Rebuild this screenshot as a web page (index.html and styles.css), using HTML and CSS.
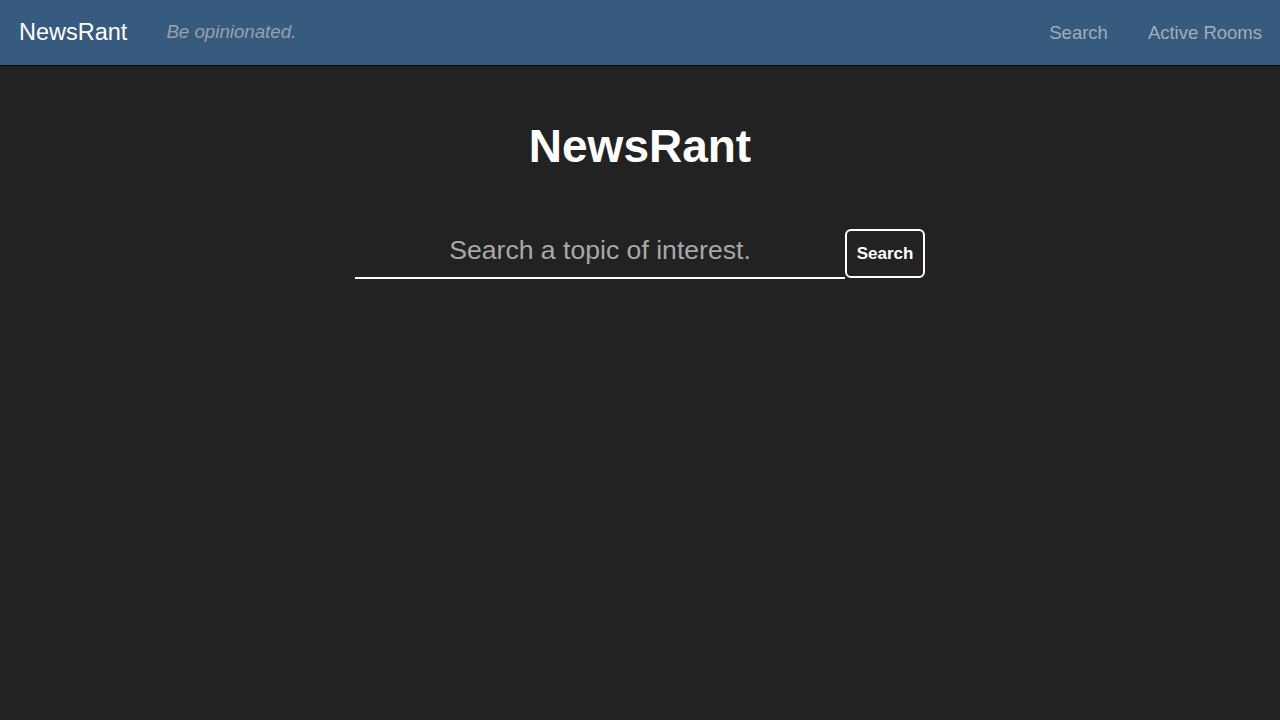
FILE: index.html
```html
<!DOCTYPE html>
<html>
<head>
<meta charset="utf-8">
<link rel="stylesheet" href="styles.css">
</head>
<body>
<nav class="navbar">
  <div class="nav-left">
    <a class="brand">NewsRant</a>
    <span class="tagline">Be opinionated.</span>
  </div>
  <div class="nav-right">
    <a class="nav-link">Search</a>
    <a class="nav-link">Active Rooms</a>
  </div>
</nav>
<main class="main">
  <h1 class="title">NewsRant</h1>
  <form class="search-form">
    <input class="search-input" type="text" placeholder="Search a topic of interest.">
    <button class="search-btn" type="button">Search</button>
  </form>
</main>
</body>
</html>
```
FILE: styles.css
```css
html, body {
  margin: 0;
  padding: 0;
  height: 100%;
}
body {
  background: #222222;
  font-family: "Liberation Sans", Arial, Helvetica, sans-serif;
  color: #fff;
}
.navbar {
  height: 65px;
  background: #375a7f;
  border-bottom: 1px solid #0b0b0b;
  display: flex;
  align-items: center;
  justify-content: space-between;
  box-sizing: content-box;
}
.nav-left {
  display: flex;
  align-items: center;
  padding-left: 19px;
}
.brand {
  font-size: 23.5px;
  color: #ffffff;
  margin-right: 39px;
  margin-top: -1px;
}
.tagline {
  font-size: 18.7px;
  font-style: italic;
  color: #9aa0a6;
  margin-top: -2px;
}
.nav-right {
  display: flex;
  align-items: center;
  gap: 40px;
  padding-right: 18px;
}
.nav-link {
  font-size: 18.5px;
  color: #a3acb5;
}
.main {
  display: flex;
  flex-direction: column;
  align-items: center;
}
.title {
  margin: 50px 0 0;
  font-size: 46px;
  font-weight: bold;
  line-height: 60px;
  color: #ffffff;
}
.search-form {
  display: flex;
  align-items: flex-end;
  margin-top: 53px;
}
.search-input {
  width: 490px;
  height: 48px;
  box-sizing: border-box;
  background: transparent;
  border: none;
  border-bottom: 2px solid #ffffff;
  outline: none;
  font-family: "Liberation Sans", Arial, sans-serif;
  font-size: 26.6px;
  text-align: center;
  color: #fff;
  padding: 0 0 8px;
}
.search-input::placeholder {
  color: #a8a8a8;
}
.search-btn {
  width: 80px;
  height: 49px;
  box-sizing: border-box;
  background: #222222;
  border: 2px solid #ffffff;
  border-radius: 6px;
  color: #ffffff;
  font-family: "Liberation Sans", Arial, sans-serif;
  font-weight: bold;
  font-size: 17px;
  padding: 0;
  margin-bottom: 1px;
}
```
